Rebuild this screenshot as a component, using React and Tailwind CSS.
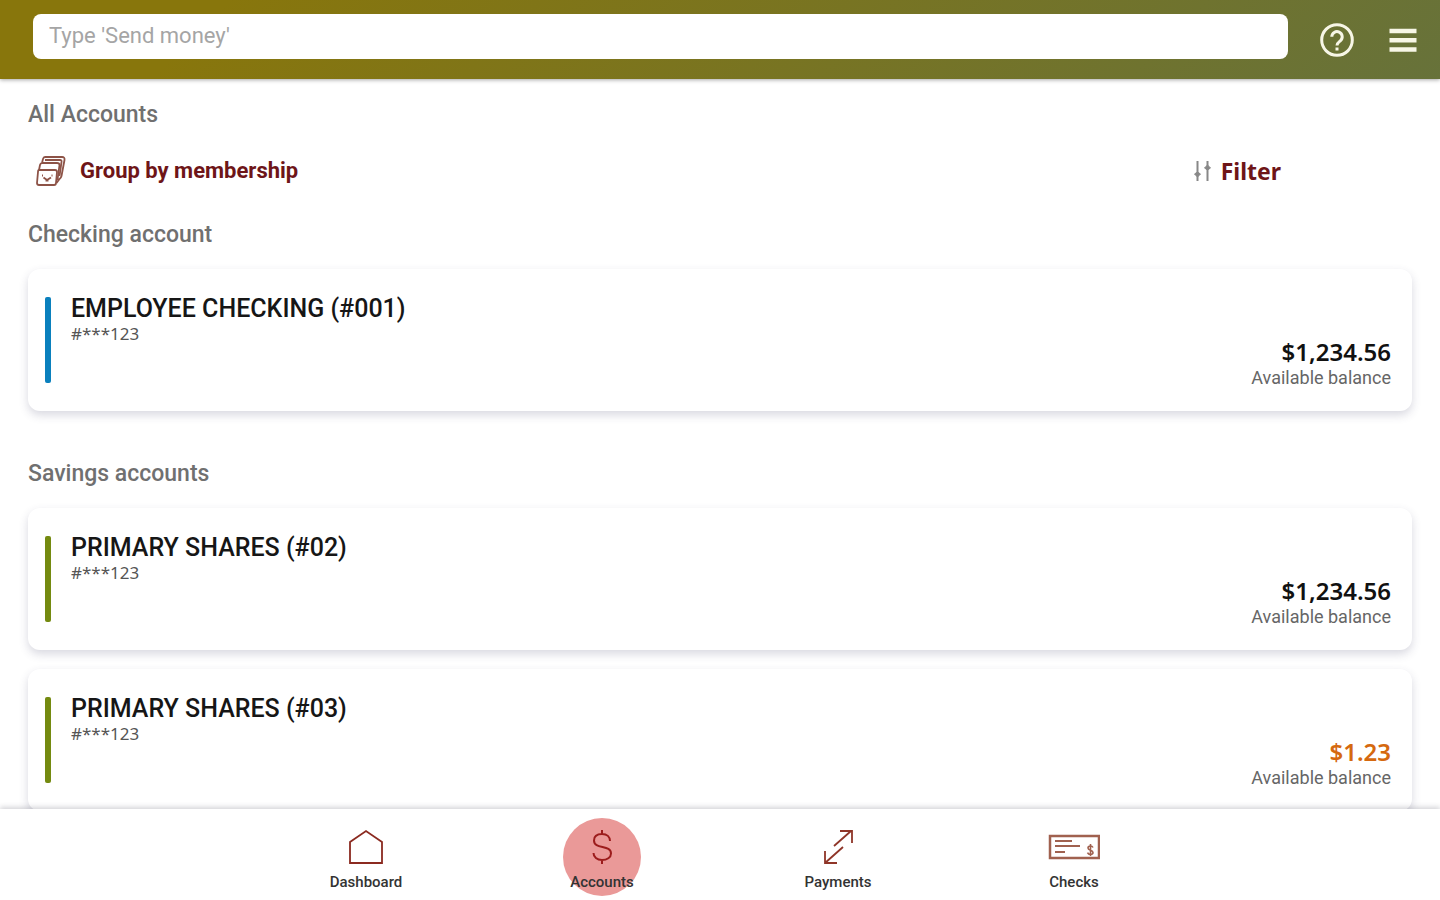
import React from 'react';

const sections = [
  {
    title: 'Checking account',
    accounts: [
      { name: 'EMPLOYEE CHECKING', suffix: '(#001)', number: '#***123', balance: '$1,234.56', bar: 'bg-[#0a80bd]', color: 'text-[#111111]' },
    ],
  },
  {
    title: 'Savings accounts',
    accounts: [
      { name: 'PRIMARY SHARES', suffix: '(#02)', number: '#***123', balance: '$1,234.56', bar: 'bg-[#748a10]', color: 'text-[#111111]' },
      { name: 'PRIMARY SHARES', suffix: '(#03)', number: '#***123', balance: '$1.23', bar: 'bg-[#748a10]', color: 'text-[#d5690f]' },
    ],
  },
];

const HomeIcon = () => (
  <svg className="h-9 w-9" viewBox="0 0 36 36" fill="none" stroke="#8b2a20" strokeWidth="1.8" aria-hidden="true">
    <path d="M2 34V13L18 2l16 11v21z" />
  </svg>
);

const DollarIcon = () => (
  <svg className="h-9 w-9" viewBox="0 0 36 36" fill="none" stroke="#9c1c1c" strokeWidth="2" aria-hidden="true">
    <path d="M26 12c0-4-3-7-8-7s-8 2.500-8 6.500c0 9 17 4 17 13 0 4-4 6.500-9 6.500s-8.500-3-8.500-7M18 1v4M18 31v4" />
  </svg>
);

const PaymentsIcon = () => (
  <svg className="h-9 w-9" viewBox="0 0 36 36" fill="none" stroke="#8f3528" strokeWidth="1.8" aria-hidden="true">
    <path d="M14 17L31 2M20 2h12v12M23 18L5 34M5 22v12h12" />
  </svg>
);

const ChecksIcon = () => (
  <svg className="h-9 w-[52px]" viewBox="0 0 52 36" fill="none" stroke="#a0614f" strokeWidth="2.500" aria-hidden="true">
    <path d="M2 7h49v22H2z" />
    <path d="M7 12h17M7 17h25M7 23h10" strokeWidth="2" />
    <path d="M45 18.500c-.5-1-1.500-1.500-2.500-1.500-1.500 0-2.500.8-2.500 2 0 3 5 1.500 5 4.500 0 1.200-1 2-2.500 2s-2.500-.7-3-1.800M42.500 15v12" strokeWidth="1.600" />
  </svg>
);

const navItems = [
  { label: 'Dashboard', icon: HomeIcon },
  { label: 'Accounts', icon: DollarIcon, active: true },
  { label: 'Payments', icon: PaymentsIcon },
  { label: 'Checks', icon: ChecksIcon },
];

const Header = () => (
  <header className="relative z-10 flex h-[79px] shrink-0 items-center bg-[linear-gradient(135deg,#88760c_15%,#67723a)] pr-[23px] pl-[33px] shadow-[0_1px_4px_rgba(0,0,0,0.35)]">
    <input
      type="text"
      aria-label="Search"
      placeholder="Type 'Send money'"
      className="mb-[6px] h-[45px] min-w-0 flex-1 rounded-lg bg-white px-4 pb-[2px] text-[22px] text-gray-700 outline-none placeholder:text-[#a5a5a5]"
    />
    <button type="button" aria-label="Help" className="ml-8">
      <svg className="h-[34px] w-[34px]" viewBox="0 0 34 34" fill="none" stroke="#f7f6e6" strokeWidth="3" aria-hidden="true">
        <circle cx="17" cy="17" r="15.300" />
        <path d="M11.800 13.800a5.200 5.200 0 1 1 8.500 4c-2 1.600-3.300 2.300-3.300 4.700" />
        <path d="M17 24.500v3" />
      </svg>
    </button>
    <button type="button" aria-label="Menu" className="ml-[35px]">
      <svg className="h-7 w-7" viewBox="0 0 28 28" stroke="#f7f6e6" strokeWidth="4.500" aria-hidden="true">
        <path d="M.5 5h27M.5 14.200h27M.5 23.400h27" />
      </svg>
    </button>
  </header>
);

const AccountCard = ({ account }) => (
  <article className="flex rounded-xl bg-white pr-[21px] pl-[17px] shadow-[0_4px_10px_rgba(60,60,100,0.2)]">
    <div className={`my-7 h-[86px] w-[6px] rounded-xs ${account.bar}`} />
    <div className="my-7 ml-5">
      <h3 className="text-[25px] leading-6 font-medium text-[#161616]">
        {account.name} {account.suffix}
      </h3>
      <p className="font-['Noto_Sans'] text-[17px] leading-[26px] text-[#555555]">{account.number}</p>
    </div>
    <div className="ml-auto self-end pb-[21px] text-right">
      <p className={`font-['Noto_Sans'] text-[24px] leading-7 font-semibold ${account.color}`}>{account.balance}</p>
      <p className="text-[18px] leading-6 text-[#666666]">Available balance</p>
    </div>
  </article>
);

const BottomNav = () => (
  <nav className="relative z-10 h-[91px] shrink-0 bg-white shadow-[0_-2px_5px_rgba(40,40,60,0.2)]">
    <div className="mx-auto grid max-w-[944px] grid-cols-4">
      {navItems.map(({ label, icon: Icon, active }) => (
        <a key={label} href="#" className="relative flex flex-col items-center pt-5" aria-current={active ? 'page' : undefined}>
          {active && <span className="absolute top-[9px] left-1/2 size-[78px] -translate-x-1/2 rounded-full bg-[#ea9998]" />}
          <span className="relative">
            <Icon />
          </span>
          <span className="relative mt-[7px] text-[15px] leading-5 font-medium text-[#333333]">{label}</span>
        </a>
      ))}
    </div>
  </nav>
);

export default function App() {
  return (
    <div className="flex h-screen flex-col overflow-hidden bg-white font-[Roboto,sans-serif]">
      <Header />
      <main className="min-h-0 flex-1 overflow-hidden px-7 pt-[22px]">
        <h1 className="text-[23px] leading-7 font-medium text-[#707070]">All Accounts</h1>
        <div className="mt-6 flex h-9 items-center justify-between pr-[131px] pl-2">
          <button type="button" className="flex items-center gap-[14px] text-[22px] leading-7 font-bold text-[#6e1518]">
            <svg className="h-8 w-[30px]" viewBox="0 0 30 32" fill="none" stroke="#8d5347" strokeWidth="1.800" strokeLinejoin="round" aria-hidden="true">
              <path d="M3 15h16q2 0 2 2l-1 11q0 2-2 2H3q-2 0-2-2l1-11q0-2 1-2z" />
              <path d="M3 15l1-5q.5-2 2-2h15q2.500 0 2.500 2l-2 15M6 8l1-4q.5-2 2-2h17q3 0 2.500 3l-3 16q-.5 2-2 3l-3 4" />
              <path d="M9 5h15q2 0 1.500 2l-2 14" />
              <path d="M6 20.500h1M15.500 20.500h1M7.500 22.500l3.500 2.500 4-2.500M9.500 25.500h3" />
            </svg>
            Group by membership
          </button>
          <button type="button" className="flex items-center gap-[10px] font-['Noto_Sans'] text-[23px] leading-7 font-bold text-[#6e1518]">
            <svg className="h-[22px] w-[18px]" viewBox="0 0 18 22" fill="#888888" stroke="#888888" strokeWidth="2" aria-hidden="true">
              <path d="M4.500 1v20M14.500 1v20" />
              <path d="M1.500 14l3-2 3 2-3 3zM11.500 8l3-3 3 3-3 2z" strokeWidth="1" />
            </svg>
            Filter
          </button>
        </div>
        {sections.map((section) => (
          <section key={section.title} className="mb-[49px] first-of-type:pt-8">
            <h2 className="text-[23px] leading-7 font-medium text-[#707070]">{section.title}</h2>
            <div className="mt-5 flex flex-col gap-[19px]">
              {section.accounts.map((account) => (
                <AccountCard key={account.suffix} account={account} />
              ))}
            </div>
          </section>
        ))}
      </main>
      <BottomNav />
    </div>
  );
}
